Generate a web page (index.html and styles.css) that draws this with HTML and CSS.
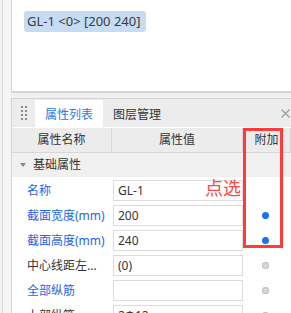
FILE: index.html
```html
<!DOCTYPE html>
<html lang="zh-CN">
<head>
    <meta charset="UTF-8">
    <meta name="viewport" content="width=device-width, initial-scale=1.0">
    <title>属性列表</title>
    <link rel="stylesheet" href="styles.css">
</head>
<body>
    <div class="app">
        <div class="rail"></div>
        <div class="main">
            <div class="canvas">
                <span class="tag">GL-1 &lt;0&gt; [200 240]</span>
            </div>
            <div class="panel">
                <div class="panel-head">
                    <div class="grip">
                        <i></i><i></i><i></i><i></i><i></i><i></i><i></i><i></i>
                    </div>
                    <button class="tab active">属性列表</button>
                    <button class="tab">图层管理</button>
                    <span class="close">
                        <svg width="9" height="9" viewBox="0 0 9 9"><path d="M0.5 0.5L8.5 8.5M8.5 0.5L0.5 8.5" stroke="#9a9a9a" stroke-width="1.1" fill="none"/></svg>
                    </span>
                </div>
                <div class="grid">
                    <div class="th">属性名称</div>
                    <div class="th">属性值</div>
                    <div class="th">附加</div>

                    <div class="group"><span class="caret"></span>基础属性</div>

                    <div class="label blue">名称</div>
                    <div class="value"><span class="field">GL-1</span></div>
                    <div class="extra"></div>

                    <div class="label blue">截面宽度(mm)</div>
                    <div class="value"><span class="field">200</span></div>
                    <div class="extra"><span class="dot on"></span></div>

                    <div class="label blue">截面高度(mm)</div>
                    <div class="value"><span class="field">240</span></div>
                    <div class="extra"><span class="dot on"></span></div>

                    <div class="label">中心线距左...</div>
                    <div class="value"><span class="field">(0)</span></div>
                    <div class="extra"><span class="dot"></span></div>

                    <div class="label blue">全部纵筋</div>
                    <div class="value"><span class="field"></span></div>
                    <div class="extra"><span class="dot"></span></div>

                    <div class="label">上部纵筋</div>
                    <div class="value"><span class="field">2Φ12</span></div>
                    <div class="extra"><span class="dot"></span></div>
                </div>
                <div class="mark"></div>
                <div class="mark-text">点选</div>
            </div>
        </div>
    </div>
</body>
</html>
```

FILE: styles.css
```css
body {
    margin: 0;
    background-color: #f0f0f0;
    font-family: "Noto Sans", "Noto Sans CJK SC", sans-serif;
    font-size: 12px;
    color: #333;
    overflow: hidden;
}

.app {
    display: flex;
    height: 313px;
    overflow: hidden;
}

.rail {
    width: 8px;
    margin-left: 2px;
    border-left: 1px solid #dadada;
    background-color: #f5f5f5;
}

.main {
    flex-grow: 1;
    display: flex;
    flex-direction: column;
    gap: 5px;
}

.canvas {
    flex-shrink: 0;
    height: 93px;
    background: #fff;
    border-left: 1px solid #d4d4d4;
    border-bottom: 2px solid #d6d6d6;
    padding: 11px 12px 0;
    box-sizing: border-box;
}

.tag {
    display: inline-block;
    background-color: #c5dcf2;
    border-radius: 3px;
    padding: 0 5px 0 3px;
    height: 21px;
    line-height: 21px;
    font-size: 13px;
    color: #3a3a3a;
}

.panel {
    position: relative;
    flex-shrink: 0;
    flex-grow: 1;
    background: #fff;
    border-top: 1px solid #d4d4d4;
    border-left: 1px solid #d4d4d4;
}

.panel-head {
    display: flex;
    align-items: stretch;
    height: 28px;
    background-color: #ececec;
}

.grip {
    width: 23px;
    display: grid;
    grid-template-columns: 2px 2px;
    grid-auto-rows: 2px;
    column-gap: 2px;
    row-gap: 2px;
    align-content: center;
    justify-content: center;
}

.grip i {
    background-color: #8a8a8a;
}

.tab {
    padding: 0 10px;
    border: none;
    background: transparent;
    font-family: inherit;
    font-size: 12px;
    color: #333;
    margin-top: 1px;
}

.tab.active {
    background: #fff;
    color: #2a7ae6;
}

.close {
    margin-left: auto;
    margin-right: 1px;
    display: flex;
    align-items: center;
}

.grid {
    display: grid;
    grid-template-columns: 100px 131px 1fr;
    grid-auto-rows: 25px;
    margin-top: 1px;
}

.th {
    height: 24px;
    line-height: 24px;
    text-align: center;
    background-color: #ececec;
    border-right: 1px solid #d8d8d8;
    border-bottom: 1px solid #d8d8d8;
}

.th:last-of-type {
    border-right: none;
}

.group {
    grid-column: 1 / 4;
    height: 24px;
    line-height: 24px;
    background-color: #f0f0f0;
    padding-left: 8px;
    display: flex;
    align-items: center;
}

.caret {
    width: 0;
    height: 0;
    border-left: 3px solid transparent;
    border-right: 3px solid transparent;
    border-top: 4px solid #888;
    margin-right: 7px;
}

.label {
    padding-left: 15px;
    line-height: 25px;
    white-space: nowrap;
    overflow: hidden;
}

.label.blue {
    color: #1e64e6;
}

.value {
    padding: 2px 0 2px 1px;
}

.field {
    display: block;
    height: 21px;
    line-height: 20px;
    box-sizing: border-box;
    border: 1px solid #dcdcdc;
    padding-left: 4px;
    color: #333;
}

.extra {
    display: flex;
    align-items: center;
    padding-left: 19px;
}

.dot {
    width: 7px;
    height: 7px;
    border-radius: 50%;
    background-color: #d8d8d8;
    box-shadow: inset 0 0 0 1px #c2c2c2;
}

.dot.on {
    background-color: #1a73e8;
    box-shadow: none;
}

.mark {
    position: absolute;
    left: 231px;
    top: 29px;
    width: 40px;
    height: 120px;
    box-sizing: border-box;
    border: 3px solid #ff3b3b;
}

.mark-text {
    position: absolute;
    left: 193px;
    top: 77px;
    font-size: 18px;
    line-height: 24px;
    color: #ff4848;
}
```
